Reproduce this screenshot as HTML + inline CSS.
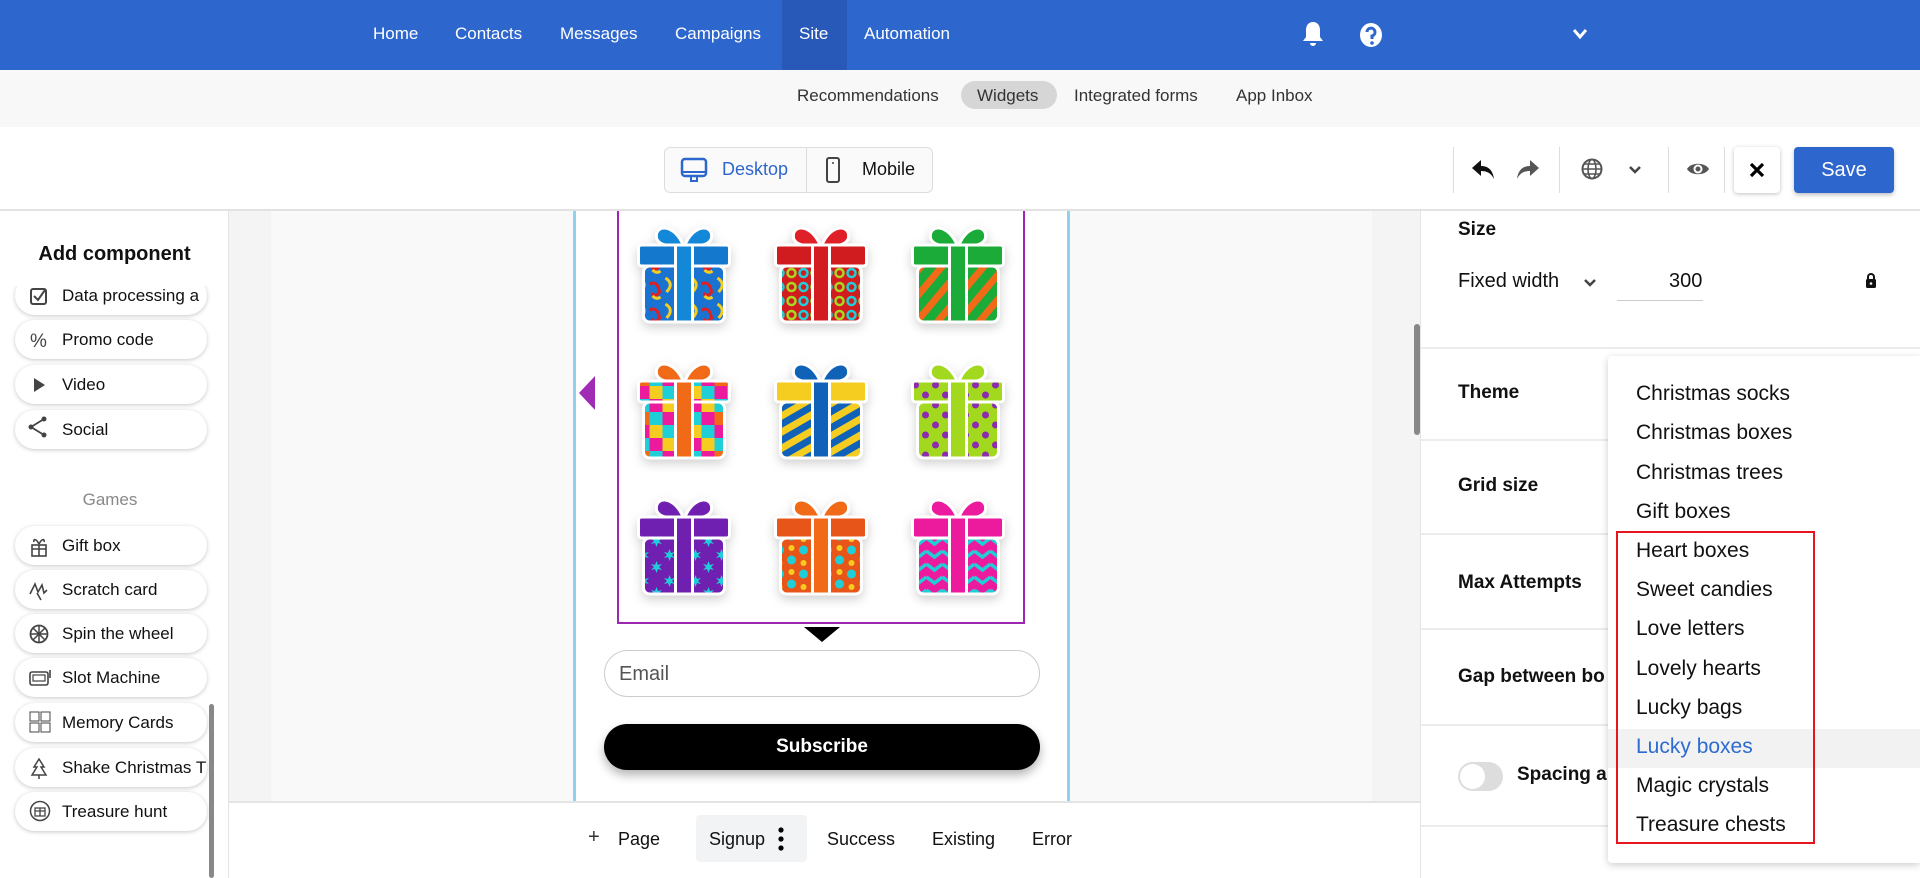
<!DOCTYPE html>
<html><head><meta charset="utf-8">
<style>
*{box-sizing:border-box;margin:0;padding:0}
body{width:1920px;height:878px;overflow:hidden;font-family:"Liberation Sans",Arial,sans-serif;background:#fff;position:relative;color:#111}
.a{position:absolute}
.nav{left:0;top:0;width:1920px;height:70px;background:#2d66cc}
.nav span{position:absolute;top:24px;color:#fff;font-size:17px}
.sub{left:0;top:70px;width:1920px;height:57px;background:#f8f8f8}
.sub span{position:absolute;top:16px;font-size:17px;color:#333}
.tb{left:0;top:127px;width:1920px;height:84px;background:#fff;border-bottom:2px solid #e2e2e2}
.side{left:0;top:211px;width:229px;height:667px;background:#fff;border-right:1px solid #e4e4e4;overflow:hidden}
.btn{position:absolute;left:15px;width:192px;height:39px;border-radius:20px;background:#fff;box-shadow:0 1px 4px rgba(0,0,0,.22);font-size:17px;white-space:nowrap;overflow:hidden;padding-left:47px;line-height:39px;color:#111}
.btn svg{position:absolute;left:14px;top:10px}
.canvas{left:229px;top:211px;width:1191px;height:590px;background:#f9f9f9}
.rp{left:1420px;top:211px;width:500px;height:667px;background:#fff;border-left:1px solid #e4e4e4}
.lbl{position:absolute;left:37px;font-size:19px;font-weight:bold;color:#111}
.hr{position:absolute;left:0;width:500px;height:2px;background:#ececec}
.dd{left:1608px;top:356px;width:312px;height:507px;background:#fff;box-shadow:0 2px 8px rgba(0,0,0,.2);border-radius:4px 0 0 4px}
.dd div{position:absolute;left:28px;font-size:21px;color:#111}
.gift{position:absolute;filter:drop-shadow(0 4px 5px rgba(0,0,0,.18))}
</style></head><body>

<div class="a nav">
 <div class="a" style="left:782px;top:0;width:65px;height:70px;background:#2858b8"></div>
 <span style="left:373px">Home</span>
 <span style="left:455px">Contacts</span>
 <span style="left:560px">Messages</span>
 <span style="left:675px">Campaigns</span>
 <span style="left:799px">Site</span>
 <span style="left:864px">Automation</span>
 <svg class="a" style="left:1301px;top:20px" width="24" height="28" viewBox="0 0 24 28"><path d="M12 2c-5 0-7 4-7 8v7l-3 4h20l-3-4v-7c0-4-2-8-7-8z M9 23a3 3 0 0 0 6 0z" fill="#fff"/></svg>
 <svg class="a" style="left:1359px;top:22px" width="24" height="26" viewBox="0 0 24 26"><ellipse cx="12" cy="13" rx="11" ry="12" fill="#fff"/><path d="M8 10a4 4 0 1 1 5 4v3" stroke="#2d66cc" stroke-width="3" fill="none"/><circle cx="13" cy="21" r="1.8" fill="#2d66cc"/></svg>
 <svg class="a" style="left:1572px;top:28px" width="16" height="12" viewBox="0 0 16 12"><path d="M2 2l6 7 6-7" stroke="#fff" stroke-width="3" fill="none"/></svg>
</div>

<div class="a sub">
 <div class="a" style="left:961px;top:11px;width:96px;height:28px;border-radius:14px;background:#d6d6d6"></div>
 <span style="left:797px">Recommendations</span>
 <span style="left:977px">Widgets</span>
 <span style="left:1074px">Integrated forms</span>
 <span style="left:1236px">App Inbox</span>
</div>

<div class="a tb">
 <div class="a" style="left:664px;top:20px;width:269px;height:46px;border:1px solid #ddd;border-radius:6px;background:#fafafa"></div>
 <div class="a" style="left:806px;top:21px;width:1px;height:44px;background:#ddd"></div>
 <svg class="a" style="left:680px;top:30px" width="28" height="28" viewBox="0 0 28 28"><rect x="2" y="2" width="24" height="17" rx="3" fill="none" stroke="#2d66cc" stroke-width="2.5"/><path d="M3 15h22" stroke="#2d66cc" stroke-width="2"/><path d="M11 19v5h6v-5" fill="none" stroke="#2d66cc" stroke-width="2"/></svg>
 <span class="a" style="left:722px;top:32px;font-size:18px;color:#2d66cc">Desktop</span>
 <svg class="a" style="left:825px;top:29px" width="16" height="28" viewBox="0 0 16 28"><rect x="2" y="2" width="12" height="24" rx="2" fill="none" stroke="#444" stroke-width="2"/><circle cx="8" cy="7" r="1" fill="#444"/></svg>
 <span class="a" style="left:862px;top:32px;font-size:18px;color:#111">Mobile</span>

 <div class="a" style="left:1453px;top:20px;width:1px;height:46px;background:#ddd"></div>
 <svg class="a" style="left:1470px;top:31px" width="26" height="24" viewBox="0 0 26 24"><path d="M11 2L2 10l9 8v-5c6 0 10 2 13 8-1-8-5-13-13-13z" fill="#111"/></svg>
 <svg class="a" style="left:1515px;top:31px" width="26" height="24" viewBox="0 0 26 24"><path d="M15 2l9 8-9 8v-5c-6 0-10 2-13 8 1-8 5-13 13-13z" fill="#555"/></svg>
 <div class="a" style="left:1559px;top:20px;width:1px;height:46px;background:#ddd"></div>
 <svg class="a" style="left:1580px;top:30px" width="24" height="24" viewBox="0 0 24 24"><circle cx="12" cy="12" r="9.5" fill="none" stroke="#555" stroke-width="2"/><ellipse cx="12" cy="12" rx="4" ry="9.5" fill="none" stroke="#555" stroke-width="1.6"/><path d="M3 12h18M4.5 7h15M4.5 17h15" stroke="#555" stroke-width="1.4"/></svg>
 <svg class="a" style="left:1628px;top:38px" width="14" height="10" viewBox="0 0 14 10"><path d="M2 2l5 5 5-5" stroke="#444" stroke-width="2.5" fill="none"/></svg>
 <div class="a" style="left:1668px;top:20px;width:1px;height:46px;background:#ddd"></div>
 <svg class="a" style="left:1686px;top:33px" width="24" height="18" viewBox="0 0 24 18"><path d="M1 9C5 2 19 2 23 9 19 16 5 16 1 9z" fill="#555"/><circle cx="12" cy="9" r="4.5" fill="#fff"/><circle cx="12" cy="9" r="2.5" fill="#555"/></svg>
 <div class="a" style="left:1724px;top:20px;width:1px;height:46px;background:#ddd"></div>
 <div class="a" style="left:1734px;top:20px;width:46px;height:46px;border-radius:4px;background:#fff;box-shadow:0 1px 4px rgba(0,0,0,.25)"></div>
 <svg class="a" style="left:1748px;top:34px" width="18" height="18" viewBox="0 0 18 18"><path d="M3 3l12 12M15 3L3 15" stroke="#000" stroke-width="3.2"/></svg>
 <div class="a" style="left:1794px;top:20px;width:100px;height:46px;border-radius:4px;background:#2d66cc;box-shadow:0 2px 4px rgba(0,0,0,.25);color:#fff;font-size:20px;text-align:center;line-height:46px">Save</div>
</div>

<div class="a side">
 <div class="a" style="left:0;top:32px;width:229px;text-align:center;font-size:20px;font-weight:bold">Add component</div>
 <div class="btn" style="top:65px">Data processing a<svg width="20" height="20" viewBox="0 0 20 20"><rect x="2" y="3" width="15" height="15" rx="2" fill="none" stroke="#444" stroke-width="2"/><path d="M5 10l4 4 7-10" stroke="#444" stroke-width="2" fill="none"/></svg></div>
 <div class="a" style="left:0;top:55px;width:228px;height:20px;background:#fff"></div>
 <div class="btn" style="top:109px">Promo code<svg width="20" height="20" viewBox="0 0 20 20"><text x="1" y="17" font-size="19" fill="#444" font-family="Liberation Sans">%</text></svg></div>
 <div class="btn" style="top:154px">Video<svg width="20" height="20" viewBox="0 0 20 20"><path d="M5 3l11 7-11 7z" fill="#444"/></svg></div>
 <div class="btn" style="top:199px">Social<svg width="22" height="22" viewBox="0 0 22 22" style="left:12px;top:6px"><circle cx="17" cy="3" r="2.5" fill="#444"/><circle cx="4" cy="11" r="2.5" fill="#444"/><circle cx="17" cy="19" r="2.5" fill="#444"/><path d="M17 3L4 11l13 8" stroke="#444" stroke-width="1.8" fill="none"/></svg></div>
 <div class="a" style="left:0;top:279px;width:220px;text-align:center;font-size:17px;color:#888">Games</div>
 <div class="btn" style="top:315px">Gift box<svg width="20" height="22" viewBox="0 0 20 22"><rect x="3" y="9" width="14" height="11" fill="none" stroke="#444" stroke-width="1.6"/><path d="M3 13h14M10 9v11M10 8C7 2 4 3 5 6M10 8c3-6 6-5 5-2" stroke="#444" stroke-width="1.6" fill="none"/></svg></div>
 <div class="btn" style="top:359px">Scratch card<svg width="24" height="22" viewBox="0 0 24 22"><path d="M1 14l5-10 3 8 4-7 2 8 3-3M8 13l4 7" stroke="#444" stroke-width="1.6" fill="none"/></svg></div>
 <div class="btn" style="top:403px">Spin the wheel<svg width="20" height="20" viewBox="0 0 20 20"><circle cx="10" cy="10" r="8.5" fill="none" stroke="#444" stroke-width="1.8"/><path d="M10 2v16M2 10h16M4 4l12 12M16 4L4 16" stroke="#444" stroke-width="1.5"/></svg></div>
 <div class="btn" style="top:447px">Slot Machine<svg width="24" height="20" viewBox="0 0 24 20"><rect x="1" y="4" width="18" height="13" rx="2" fill="none" stroke="#444" stroke-width="1.6"/><rect x="4" y="7" width="12" height="6" fill="none" stroke="#444" stroke-width="1.2"/><path d="M21 2v8" stroke="#444" stroke-width="1.6"/></svg></div>
 <div class="btn" style="top:492px">Memory Cards<svg width="22" height="22" viewBox="0 0 22 22" style="top:8px"><rect x="1" y="1" width="9" height="9" fill="none" stroke="#444"/><rect x="12" y="1" width="9" height="9" fill="none" stroke="#444"/><rect x="1" y="12" width="9" height="9" fill="none" stroke="#444"/><rect x="12" y="12" width="9" height="9" fill="none" stroke="#444"/></svg></div>
 <div class="btn" style="top:537px">Shake Christmas T<svg width="20" height="22" viewBox="0 0 20 22"><path d="M10 1L5 9h3l-5 8h14l-5-8h3z M10 17v4" stroke="#444" stroke-width="1.5" fill="none"/></svg></div>
 <div class="btn" style="top:581px">Treasure hunt<svg width="22" height="22" viewBox="0 0 22 22" style="top:8px"><circle cx="11" cy="11" r="9.5" fill="none" stroke="#444" stroke-width="1.5"/><rect x="6" y="8" width="10" height="8" fill="none" stroke="#444" stroke-width="1.3"/><path d="M6 11h10M11 8v8" stroke="#444" stroke-width="1.3"/></svg></div>
 <div class="a" style="left:209px;top:493px;width:5px;height:174px;background:#888;border-radius:3px"></div>
</div>

<div class="a canvas">
 <div class="a" style="left:0;top:0;width:42px;height:590px;background:#f4f4f4"></div>
 <div class="a" style="left:1143px;top:0;width:48px;height:590px;background:#f4f4f4"></div>
 <div class="a" style="left:344px;top:0;width:497px;height:590px;background:#fff;border-left:3px solid #90d0f0;border-right:3px solid #90d0f0"></div>
</div>
<svg class="a" style="left:577px;top:375px" width="20" height="36" viewBox="0 0 20 36"><path d="M18 1L2 18l16 17z" fill="#a02bb4"/></svg>
<div class="a" style="left:617px;top:211px;width:408px;height:413px;border:2px solid #9c27b0;border-top:none"></div>
<svg class="a" style="left:800px;top:624px" width="44" height="20" viewBox="0 0 44 20"><rect x="0" y="0" width="44" height="6" fill="#fff"/><path d="M4 3h36L22 18z" fill="#000"/></svg>
<div class="a" style="left:604px;top:650px;width:436px;height:47px;border:1px solid #ccc;border-radius:24px;font-size:20px;color:#555;padding:12px 14px">Email</div>
<div class="a" style="left:604px;top:724px;width:436px;height:46px;background:#000;border-radius:23px;color:#fff;font-size:19px;font-weight:bold;text-align:center;line-height:46px;box-shadow:0 5px 10px rgba(0,0,0,.3)">Subscribe</div>

<svg width="0" height="0" class="a"><defs>
<pattern id="p1" width="26" height="26" patternUnits="userSpaceOnUse"><rect width="26" height="26" fill="#1a73d0"/><path d="M3 2q9 6 1 14" stroke="#f5cc20" stroke-width="3" fill="none"/><path d="M13 8q8 -4 10 8q-4 6 -8 1" stroke="#e02020" stroke-width="3" fill="none"/><path d="M16 20q4 4 8 1" stroke="#f5cc20" stroke-width="3" fill="none"/></pattern>
<pattern id="p2" width="24" height="14" patternUnits="userSpaceOnUse"><rect width="24" height="14" fill="#d01c1f"/><circle cx="6" cy="7" r="4" stroke="#1ecfd8" stroke-width="2.5" fill="none"/><circle cx="18" cy="7" r="4" stroke="#a8d820" stroke-width="2.5" fill="none"/></pattern>
<pattern id="p3" width="16" height="16" patternUnits="userSpaceOnUse" patternTransform="rotate(40)"><rect width="16" height="16" fill="#1aab38"/><rect width="7" height="16" fill="#f06a18"/></pattern>
<pattern id="p4" width="39" height="39" patternUnits="userSpaceOnUse"><rect width="13" height="13" fill="#1ecfd8"/><rect x="13" width="13" height="13" fill="#ec1a9c"/><rect x="26" width="13" height="13" fill="#f5cc20"/><rect y="13" width="13" height="13" fill="#f06a18"/><rect x="13" y="13" width="13" height="13" fill="#1ecfd8"/><rect x="26" y="13" width="13" height="13" fill="#ec1a9c"/><rect y="26" width="13" height="13" fill="#ec1a9c"/><rect x="13" y="26" width="13" height="13" fill="#f5cc20"/><rect x="26" y="26" width="13" height="13" fill="#1ecfd8"/></pattern>
<pattern id="p5" width="14" height="14" patternUnits="userSpaceOnUse" patternTransform="rotate(-30)"><rect width="14" height="14" fill="#f5cc20"/><rect width="14" height="7" fill="#0f62b8"/></pattern>
<pattern id="p6" width="20" height="20" patternUnits="userSpaceOnUse"><rect width="20" height="20" fill="#a2d81e"/><circle cx="5" cy="5" r="3.5" fill="#8c2bb0"/><circle cx="15" cy="15" r="3.5" fill="#8c2bb0"/></pattern>
<pattern id="p7" width="26" height="26" patternUnits="userSpaceOnUse"><rect width="26" height="26" fill="#7020b0"/><path d="M7 1l1.5 4 4-1-3 3 3 3-4-1-1.5 4-1.5-4-4 1 3-3-3-3 4 1z" fill="#1ecfd8"/><path d="M20 13l1.5 4 4-1-3 3 3 3-4-1-1.5 4-1.5-4-4 1 3-3-3-3 4 1z" fill="#1ecfd8"/></pattern>
<pattern id="p8" width="24" height="24" patternUnits="userSpaceOnUse"><rect width="24" height="24" fill="#e85518"/><circle cx="6" cy="6" r="4.5" fill="#1ecfd8"/><circle cx="18" cy="16" r="4.5" fill="#1ecfd8"/><circle cx="18" cy="4" r="3" fill="#f5cc20"/><circle cx="6" cy="19" r="3" fill="#f5cc20"/></pattern>
<pattern id="p9" width="16" height="13" patternUnits="userSpaceOnUse"><rect width="16" height="13" fill="#ec1a9c"/><path d="M0 3l8 6 8-6" stroke="#1ecfd8" stroke-width="3.5" fill="none"/></pattern>
</defs></svg>

<svg class="gift" style="left:635px;top:222px" width="98" height="104" viewBox="-1 -2 97 104"><g stroke="#fff" stroke-width="3"><path d="M47 22C38 -1 18 0 20 14 22 22 36 23 47 22Z M48 22C57 -1 77 0 75 14 73 22 59 23 48 22Z" fill="#1488d8"/><rect x="7" y="42" width="81" height="56" rx="6" fill="url(#p1)"/><rect x="2" y="21" width="91" height="21" rx="3" fill="#1478cc"/><rect x="39" y="21" width="17" height="77" fill="#1488d8"/></g></svg>
<svg class="gift" style="left:772px;top:222px" width="98" height="104" viewBox="-1 -2 97 104"><g stroke="#fff" stroke-width="3"><path d="M47 22C38 -1 18 0 20 14 22 22 36 23 47 22Z M48 22C57 -1 77 0 75 14 73 22 59 23 48 22Z" fill="#e02028"/><rect x="7" y="42" width="81" height="56" rx="6" fill="url(#p2)"/><rect x="2" y="21" width="91" height="21" rx="3" fill="#d01c1f"/><rect x="39" y="21" width="17" height="77" fill="#d41c20"/></g></svg>
<svg class="gift" style="left:909px;top:222px" width="98" height="104" viewBox="-1 -2 97 104"><g stroke="#fff" stroke-width="3"><path d="M47 22C38 -1 18 0 20 14 22 22 36 23 47 22Z M48 22C57 -1 77 0 75 14 73 22 59 23 48 22Z" fill="#1aab38"/><rect x="7" y="42" width="81" height="56" rx="6" fill="url(#p3)"/><rect x="2" y="21" width="91" height="21" rx="3" fill="#1aab38"/><rect x="39" y="21" width="17" height="77" fill="#1aab38"/></g></svg>

<svg class="gift" style="left:635px;top:358px" width="98" height="104" viewBox="-1 -2 97 104"><g stroke="#fff" stroke-width="3"><path d="M47 22C38 -1 18 0 20 14 22 22 36 23 47 22Z M48 22C57 -1 77 0 75 14 73 22 59 23 48 22Z" fill="#f06a18"/><rect x="7" y="42" width="81" height="56" rx="6" fill="url(#p4)"/><rect x="2" y="21" width="91" height="21" rx="3" fill="url(#p4)"/><rect x="39" y="21" width="17" height="77" fill="#f06a18"/></g></svg>
<svg class="gift" style="left:772px;top:358px" width="98" height="104" viewBox="-1 -2 97 104"><g stroke="#fff" stroke-width="3"><path d="M47 22C38 -1 18 0 20 14 22 22 36 23 47 22Z M48 22C57 -1 77 0 75 14 73 22 59 23 48 22Z" fill="#0f62b8"/><rect x="7" y="42" width="81" height="56" rx="6" fill="url(#p5)"/><rect x="2" y="21" width="91" height="21" rx="3" fill="#f5cc20"/><rect x="39" y="21" width="17" height="77" fill="#0f62b8"/></g></svg>
<svg class="gift" style="left:909px;top:358px" width="98" height="104" viewBox="-1 -2 97 104"><g stroke="#fff" stroke-width="3"><path d="M47 22C38 -1 18 0 20 14 22 22 36 23 47 22Z M48 22C57 -1 77 0 75 14 73 22 59 23 48 22Z" fill="#a2d81e"/><rect x="7" y="42" width="81" height="56" rx="6" fill="url(#p6)"/><rect x="2" y="21" width="91" height="21" rx="3" fill="url(#p6)"/><rect x="39" y="21" width="17" height="77" fill="#a2d81e"/></g></svg>

<svg class="gift" style="left:635px;top:494px" width="98" height="104" viewBox="-1 -2 97 104"><g stroke="#fff" stroke-width="3"><path d="M47 22C38 -1 18 0 20 14 22 22 36 23 47 22Z M48 22C57 -1 77 0 75 14 73 22 59 23 48 22Z" fill="#7020b0"/><rect x="7" y="42" width="81" height="56" rx="6" fill="url(#p7)"/><rect x="2" y="21" width="91" height="21" rx="3" fill="#7020b0"/><rect x="39" y="21" width="17" height="77" fill="#7020b0"/></g></svg>
<svg class="gift" style="left:772px;top:494px" width="98" height="104" viewBox="-1 -2 97 104"><g stroke="#fff" stroke-width="3"><path d="M47 22C38 -1 18 0 20 14 22 22 36 23 47 22Z M48 22C57 -1 77 0 75 14 73 22 59 23 48 22Z" fill="#f06a18"/><rect x="7" y="42" width="81" height="56" rx="6" fill="url(#p8)"/><rect x="2" y="21" width="91" height="21" rx="3" fill="#e85518"/><rect x="39" y="21" width="17" height="77" fill="#f06a18"/></g></svg>
<svg class="gift" style="left:909px;top:494px" width="98" height="104" viewBox="-1 -2 97 104"><g stroke="#fff" stroke-width="3"><path d="M47 22C38 -1 18 0 20 14 22 22 36 23 47 22Z M48 22C57 -1 77 0 75 14 73 22 59 23 48 22Z" fill="#ec1a9c"/><rect x="7" y="42" width="81" height="56" rx="6" fill="url(#p9)"/><rect x="2" y="21" width="91" height="21" rx="3" fill="#ec1a9c"/><rect x="39" y="21" width="17" height="77" fill="#ec1a9c"/></g></svg>

<div class="a" style="left:229px;top:801px;width:1191px;height:77px;background:#fff;border-top:2px solid #e4e4e4"></div>
<div class="a" style="left:696px;top:815px;width:111px;height:47px;background:#f2f3f5;border-radius:4px"></div>
<span class="a" style="left:588px;top:826px;font-size:20px;color:#333">+</span>
<span class="a" style="left:618px;top:829px;font-size:18px">Page</span>
<span class="a" style="left:709px;top:829px;font-size:18px">Signup</span>
<svg class="a" style="left:778px;top:826px" width="6" height="26" viewBox="0 0 6 26"><circle cx="3" cy="4" r="2.6"/><circle cx="3" cy="13" r="2.6"/><circle cx="3" cy="22" r="2.6"/></svg>
<span class="a" style="left:827px;top:829px;font-size:18px">Success</span>
<span class="a" style="left:932px;top:829px;font-size:18px">Existing</span>
<span class="a" style="left:1032px;top:829px;font-size:18px">Error</span>

<div class="a" style="left:1414px;top:324px;width:6px;height:111px;background:#888;border-radius:3px"></div>
<div class="a rp">
 <div class="lbl" style="top:8px">Size</div>
 <span class="a" style="left:37px;top:59px;font-size:20px">Fixed width</span>
 <svg class="a" style="left:162px;top:67px" width="14" height="10" viewBox="0 0 14 10"><path d="M2 2l5 5 5-5" stroke="#444" stroke-width="2.5" fill="none"/></svg>
 <span class="a" style="left:248px;top:59px;font-size:20px">300</span>
 <div class="a" style="left:196px;top:89px;width:86px;height:1px;background:#ccc"></div>
 <svg class="a" style="left:444px;top:61px" width="12" height="17" viewBox="0 0 12 17"><path d="M3 7V5a3 3 0 0 1 6 0v2" stroke="#111" stroke-width="2" fill="none"/><rect x="1" y="7" width="10" height="9" rx="1.5" fill="#111"/><circle cx="6" cy="11.5" r="1.3" fill="#fff"/></svg>
 <div class="hr" style="top:136px"></div>
 <div class="lbl" style="top:171px">Theme</div>
 <div class="hr" style="top:228px"></div>
 <div class="lbl" style="top:264px">Grid size</div>
 <div class="hr" style="top:322px"></div>
 <div class="lbl" style="top:361px">Max Attempts</div>
 <div class="hr" style="top:417px"></div>
 <div class="lbl" style="top:455px">Gap between bo</div>
 <div class="hr" style="top:513px"></div>
 <div class="a" style="left:37px;top:551px;width:45px;height:29px;border-radius:15px;background:#ddd"></div>
 <div class="a" style="left:39px;top:553px;width:25px;height:25px;border-radius:50%;background:#fff"></div>
 <div class="lbl" style="left:96px;top:553px">Spacing a</div>
 <div class="hr" style="top:614px"></div>
</div>

<div class="a dd">
 <div style="top:26px">Christmas socks</div>
 <div style="top:65px">Christmas boxes</div>
 <div style="top:105px">Christmas trees</div>
 <div style="top:144px">Gift boxes</div>
 <div style="top:183px">Heart boxes</div>
 <div style="top:222px">Sweet candies</div>
 <div style="top:261px">Love letters</div>
 <div style="top:301px">Lovely hearts</div>
 <div style="top:340px">Lucky bags</div>
 <div style="left:0;top:373px;width:312px;height:39px;background:#f2f2f2"></div>
 <div style="top:379px;color:#2d6bd0">Lucky boxes</div>
 <div style="top:418px">Magic crystals</div>
 <div style="top:457px">Treasure chests</div>
</div>
<div class="a" style="left:1616px;top:531px;width:199px;height:313px;border:2px solid #e8141e"></div>
</body></html>
